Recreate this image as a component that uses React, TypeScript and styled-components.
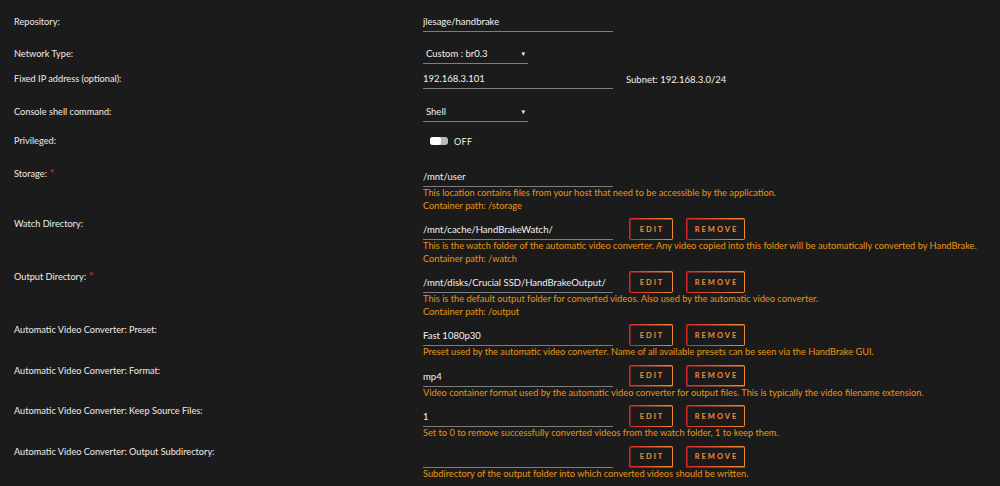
import React from "react";
import styled, { createGlobalStyle } from "styled-components";

const GlobalStyle = createGlobalStyle`
  html, body {
    margin: 0;
    background: #1c1b1b;
  }
  body {
    font-family: Lato, "Liberation Sans", sans-serif;
    color: #f2f2f2;
  }
`;

interface ParamRow {
  label: string;
  value: string;
  required?: boolean;
  help: string[];
}

const params: ParamRow[] = [
  {
    label: "Watch Directory:",
    value: "/mnt/cache/HandBrakeWatch/",
    help: [
      "This is the watch folder of the automatic video converter. Any video copied into this folder will be automatically converted by HandBrake.",
      "Container path: /watch",
    ],
  },
  {
    label: "Output Directory:",
    value: "/mnt/disks/Crucial SSD/HandBrakeOutput/",
    required: true,
    help: [
      "This is the default output folder for converted videos. Also used by the automatic video converter.",
      "Container path: /output",
    ],
  },
  {
    label: "Automatic Video Converter: Preset:",
    value: "Fast 1080p30",
    help: [
      "Preset used by the automatic video converter. Name of all available presets can be seen via the HandBrake GUI.",
    ],
  },
  {
    label: "Automatic Video Converter: Format:",
    value: "mp4",
    help: [
      "Video container format used by the automatic video converter for output files. This is typically the video filename extension.",
    ],
  },
  {
    label: "Automatic Video Converter: Keep Source Files:",
    value: "1",
    help: [
      "Set to 0 to remove successfully converted videos from the watch folder, 1 to keep them.",
    ],
  },
  {
    label: "Automatic Video Converter: Output Subdirectory:",
    value: "",
    help: [
      "Subdirectory of the output folder into which converted videos should be written.",
    ],
  },
];

const App: React.FC = () => {
  return (
    <>
      <GlobalStyle />
      <Page>
        <Row $top={0} $center>
          <Label>Repository:</Label>
          <Field readOnly defaultValue="jlesage/handbrake" />
        </Row>

        <Row $top={12} $center>
          <Label>Network Type:</Label>
          <Select>
            <span>Custom : br0.3</span>
            <Arrow>▾</Arrow>
          </Select>
        </Row>

        <Row $top={5} $center>
          <Label>Fixed IP address (optional):</Label>
          <Field readOnly defaultValue="192.168.3.101" />
          <Subnet>Subnet: 192.168.3.0/24</Subnet>
        </Row>

        <Row $top={13} $center>
          <Label>Console shell command:</Label>
          <Select>
            <span>Shell</span>
            <Arrow>▾</Arrow>
          </Select>
        </Row>

        <Row $top={9} $center>
          <Label>Privileged:</Label>
          <Switch>
            <Knob />
          </Switch>
          <SwitchText>OFF</SwitchText>
        </Row>

        <Row $top={16}>
          <Label $pad={1}>
            Storage:<Req>*</Req>
          </Label>
          <Value>
            <Field readOnly defaultValue="/mnt/user" />
            <Help>
              <div>This location contains files from your host that need to be accessible by the application.</div>
              <div>Container path: /storage</div>
            </Help>
          </Value>
        </Row>

        {params.map((p) => (
          <Row $top={6} key={p.label}>
            <Label>
              {p.label}
              {p.required && <Req>*</Req>}
            </Label>
            <Value>
              <FieldLine>
                <Field readOnly defaultValue={p.value} />
                <ActionButton $w={44} $gap={16}>EDIT</ActionButton>
                <ActionButton $w={59} $gap={13}>REMOVE</ActionButton>
              </FieldLine>
              <Help>
                {p.help.map((line) => (
                  <div key={line}>{line}</div>
                ))}
              </Help>
            </Value>
          </Row>
        ))}
      </Page>
    </>
  );
};

const Page = styled.div`
  width: 1000px;
  height: 486px;
  overflow: hidden;
  padding-top: 12px;
  box-sizing: border-box;
`;

const Row = styled.div<{ $top: number; $center?: boolean }>`
  display: flex;
  align-items: ${(p) => (p.$center ? "center" : "flex-start")};
  margin-top: ${(p) => p.$top}px;
  min-height: 20px;
`;

const Label = styled.div<{ $pad?: number }>`
  width: 423px;
  flex-shrink: 0;
  box-sizing: border-box;
  padding-left: 14px;
  padding-top: ${(p) => p.$pad || 0}px;
  font-size: 9.2px;
  line-height: 12px;
  color: #ececec;
`;

const Req = styled.span`
  color: #ee2424;
  font-size: 9.5px;
  font-weight: 700;
  vertical-align: top;
  margin-left: 3px;
  line-height: 10px;
`;

const Value = styled.div`
  display: flex;
  flex-direction: column;
`;

const FieldLine = styled.div`
  display: flex;
  align-items: flex-end;
`;

const Field = styled.input`
  width: 190px;
  height: 20px;
  box-sizing: border-box;
  padding: 0;
  margin: 0;
  border: none;
  border-bottom: 1px solid #7d7d7d;
  background: transparent;
  color: #f2f2f2;
  font-family: Lato, "Liberation Sans", sans-serif;
  font-size: 9.5px;
  outline: none;
`;

const Select = styled.div`
  width: 105px;
  height: 20px;
  box-sizing: border-box;
  padding: 0 3px 0 3px;
  border-bottom: 1px solid #7d7d7d;
  display: flex;
  align-items: center;
  justify-content: space-between;
  font-size: 9.5px;
`;

const Arrow = styled.span`
  font-size: 7px;
  font-family: "DejaVu Sans", sans-serif;
`;

const Subnet = styled.span`
  margin-left: 13px;
  font-size: 9.5px;
`;

const Switch = styled.div`
  margin-left: 7px;
  width: 18px;
  height: 8px;
  border-radius: 3px;
  background: #b9b9b9;
  display: flex;
`;

const Knob = styled.div`
  width: 11px;
  height: 8px;
  border-radius: 3px;
  background: #ffffff;
`;

const SwitchText = styled.span`
  margin-left: 6px;
  font-size: 9px;
  letter-spacing: 0.3px;
`;

const ActionButton = styled.button<{ $w: number; $gap: number }>`
  width: ${(p) => p.$w}px;
  height: 22px;
  margin-left: ${(p) => p.$gap}px;
  padding: 0;
  border: none;
  border-radius: 2px;
  background: linear-gradient(90deg, #d8262a 0, #f08a32) 0 0 no-repeat,
    linear-gradient(90deg, #d8262a 0, #f08a32) 0 100% no-repeat,
    linear-gradient(0deg, #d8262a 0, #d8262a) 0 100% no-repeat,
    linear-gradient(0deg, #f08a32 0, #f08a32) 100% 100% no-repeat;
  background-size: 100% 1.5px, 100% 1.5px, 1.5px 100%, 1.5px 100%;
  background-color: transparent;
  color: #f08c3c;
  font-family: Lato, "Liberation Sans", sans-serif;
  font-size: 7.5px;
  font-weight: 700;
  letter-spacing: 2px;
  text-indent: 2px;
  cursor: pointer;
`;

const Help = styled.div`
  color: #e69614;
  font-size: 9.25px;
  line-height: 12.5px;
`;

export default App;
